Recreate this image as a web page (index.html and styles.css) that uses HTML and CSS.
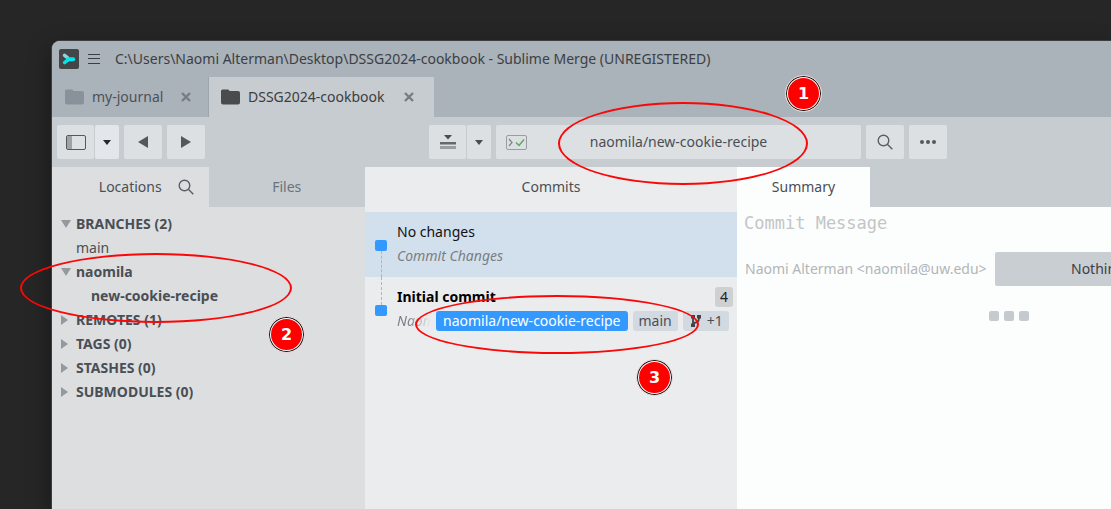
FILE: index.html
```html
<!DOCTYPE html>
<html lang="en">
<head>
<meta charset="utf-8">
<title>Sublime Merge</title>
<link rel="stylesheet" href="styles.css">
</head>
<body>
<main class="desktop">
  <div class="window">
    <header class="titlebar">
      <svg class="logo" viewBox="0 0 20 20" width="20" height="20" aria-hidden="true">
        <rect width="20" height="20" rx="2" fill="#444546"/>
        <path d="M5.500 6.300L8.500 8.600" stroke="#8bd6d8" stroke-width="3.400" stroke-linecap="round"/>
        <path d="M5.500 13.600L9.500 10.600" stroke="#00e5ee" stroke-width="3.400" stroke-linecap="round"/>
        <path d="M9 10.200H14.200" stroke="#00e5ee" stroke-width="4" stroke-linecap="round"/>
      </svg>
      <button class="menu" aria-label="Menu">
        <svg viewBox="0 0 12 10" width="12" height="10"><path d="M0 .5H12M0 4.500H12M0 9.500H12" stroke="#3b3e41"/></svg>
      </button>
      <h1 class="title">C:\Users\Naomi Alterman\Desktop\DSSG2024-cookbook - Sublime Merge (UNREGISTERED)</h1>
    </header>

    <nav class="repo-tabs">
      <div class="repo-tab repo-journal">
        <svg class="folder" viewBox="0 0 19 16" width="19" height="16"><path d="M0 2Q0 .5 1.500 .5H7Q8 .5 8.500 2H17Q19 2 19 4V13.500Q19 15.500 17 15.500H2Q0 15.500 0 13.500Z" fill="currentColor"/></svg>
        <a class="repo-name" href="#journal">my-journal</a>
        <button class="close" aria-label="Close my-journal"><svg viewBox="0 0 10 10" width="10" height="10"><path d="M1 1L9 9M9 1L1 9" stroke="currentColor" stroke-width="2.400"/></svg></button>
      </div>
      <div class="repo-tab repo-active">
        <svg class="folder" viewBox="0 0 19 16" width="19" height="16"><path d="M0 2Q0 .5 1.500 .5H7Q8 .5 8.500 2H17Q19 2 19 4V13.500Q19 15.500 17 15.500H2Q0 15.500 0 13.500Z" fill="currentColor"/></svg>
        <a class="repo-name" href="#cookbook">DSSG2024-cookbook</a>
        <button class="close" aria-label="Close DSSG2024-cookbook"><svg viewBox="0 0 10 10" width="10" height="10"><path d="M1 1L9 9M9 1L1 9" stroke="currentColor" stroke-width="2.400"/></svg></button>
      </div>
    </nav>

    <div class="toolbar">
      <div class="tools tools-nav">
        <div class="split">
          <button class="tool" aria-label="Side bar"><svg viewBox="0 0 20 15" width="20" height="15"><rect x=".5" y=".5" width="19" height="14" rx="1.500" fill="none" stroke="#55585a"/><path d="M1 1H6V14H1Z" fill="#a0a3a5"/></svg></button>
          <button class="tool drop drop-lit" aria-label="Layout options"><svg viewBox="0 0 8 5" width="8" height="5"><path d="M0 0H8L4 5Z" fill="#26282a"/></svg></button>
        </div>
        <button class="tool" aria-label="Back"><svg viewBox="0 0 10 12" width="10" height="12"><path d="M10 0V12L0 6Z" fill="#55585a"/></svg></button>
        <button class="tool" aria-label="Forward"><svg viewBox="0 0 10 12" width="10" height="12"><path d="M0 0V12L10 6Z" fill="#55585a"/></svg></button>
      </div>
      <div class="tools tools-main">
        <div class="split">
          <button class="tool" aria-label="Stash"><svg viewBox="0 0 16 14" width="16" height="14"><path d="M4 0H12L8 4.500Z" fill="#4a4d50"/><path d="M0 7H16V9.500H0Z" fill="#66696c"/><path d="M0 11H16V14H0Z" fill="#9b9ea1"/></svg></button>
          <button class="tool drop" aria-label="Stash options"><svg viewBox="0 0 8 5" width="8" height="5"><path d="M0 0H8L4 5Z" fill="#4a4d50"/></svg></button>
        </div>
        <button class="location">
          <svg viewBox="0 0 21 15" width="21" height="15"><rect x=".5" y=".5" width="20" height="14" rx="1.500" fill="none" stroke="#9a9da0"/><path d="M3 4L6 7.500L3 11" fill="none" stroke="#85888b" stroke-width="1.300"/><path d="M10 7.500L13 10.500L18 4.500" fill="none" stroke="#5fa95c" stroke-width="1.500"/></svg>
          <span>naomila/new-cookie-recipe</span>
        </button>
        <button class="tool" aria-label="Search"><svg class="glass" viewBox="0 0 16 16" width="16" height="16"><circle cx="6.500" cy="6.500" r="5.300"/><path d="M10.300 10.300L15.300 15.300"/></svg></button>
        <button class="tool" aria-label="More"><svg viewBox="0 0 16 4" width="16" height="4"><g fill="#55585a"><circle cx="2" cy="2" r="2"/><circle cx="8" cy="2" r="2"/><circle cx="14" cy="2" r="2"/></g></svg></button>
      </div>
    </div>

    <div class="panes">
      <aside class="sidebar">
        <div class="side-tabs">
          <div class="side-tab side-open">
            <a href="#locations">Locations</a>
            <button class="find" aria-label="Find location"><svg class="glass" viewBox="0 0 16 16" width="16" height="16"><circle cx="6.500" cy="6.500" r="5.300"/><path d="M10.300 10.300L15.300 15.300"/></svg></button>
          </div>
          <a class="side-tab" href="#files">Files</a>
        </div>
        <ul class="tree">
          <li class="group open">BRANCHES (2)</li>
          <li>main</li>
          <li class="group open">naomila</li>
          <li class="child">new-cookie-recipe</li>
          <li class="group">REMOTES (1)</li>
          <li class="group">TAGS (0)</li>
          <li class="group">STASHES (0)</li>
          <li class="group">SUBMODULES (0)</li>
        </ul>
      </aside>

      <section class="commits">
        <h2 class="pane-title">Commits</h2>
        <div class="commit selected">
          <span class="track track-down"></span>
          <div class="commit-body">
            <div class="line subject">No changes</div>
            <div class="line note">Commit Changes</div>
          </div>
        </div>
        <div class="commit">
          <span class="track track-up"></span>
          <div class="commit-body">
            <div class="line subject subject-bold">Initial commit <span class="count">4</span></div>
            <div class="line note">
              <span class="author">Naomi</span>
              <span class="ref ref-head">naomila/new-cookie-recipe</span>
              <span class="ref">main</span>
              <span class="ref ref-more"><svg viewBox="0 0 10 12" width="10" height="12"><path d="M2 2V10M2 8Q8 8 8 3" fill="none" stroke="#3f4449" stroke-width="1.800"/><path d="M0 0H4V3.500H0ZM6 0H10V3.500H6ZM0 8.500H4V12H0Z" fill="#3f4449"/></svg>+1</span>
            </div>
          </div>
        </div>
      </section>

      <section class="details">
        <div class="detail-tabs"><a class="detail-tab" href="#summary">Summary</a></div>
        <textarea class="message" rows="1" aria-label="Commit message" placeholder="Commit Message"></textarea>
        <div class="commit-bar">
          <span class="identity">Naomi Alterman &lt;naomila@uw.edu&gt;</span>
          <button class="commit-button" disabled>Nothing</button>
        </div>
        <div class="grip"><i></i><i></i><i></i></div>
      </section>
    </div>
  </div>

  <div class="ring ring-one"></div>
  <div class="ring ring-two"></div>
  <div class="ring ring-three"></div>
  <div class="step step-one">1</div>
  <div class="step step-two">2</div>
  <div class="step step-three">3</div>
</main>
</body>
</html>
```
FILE: styles.css
```css
* { box-sizing: border-box; }

body {
  margin: 0;
  background: #262626;
  color: #4a4f55;
  font: 14px/24px "Noto Sans", "Open Sans", sans-serif;
}

button {
  border: 0;
  padding: 0;
  background: none;
  color: inherit;
  font: inherit;
  display: flex;
  align-items: center;
  justify-content: center;
}

a { color: inherit; text-decoration: none; }
svg { display: block; flex: none; }

.glass { fill: none; stroke: #5b5f63; stroke-width: 1.4; }

.desktop {
  position: relative;
  min-height: 100vh;
  padding: 41px 0 0 52px;
  display: flex;
  overflow: hidden;
}

.window {
  flex: 1;
  min-width: 0;
  display: flex;
  flex-direction: column;
  overflow: hidden;
  border-radius: 8px 0 0 0;
  background: #c7ccd0;
  box-shadow: 0 0 0 1px #3d3d3e, 0 8px 24px #00000066;
}

/* Title bar and repository tabs */
.titlebar {
  display: flex;
  align-items: center;
  height: 36px;
  padding-left: 7px;
  background: #aab2ba;
}
.menu { margin: 0 15px 0 9px; }
.title { margin: 0; color: #3c3f43; font-size: 14px; font-weight: 400; white-space: nowrap; }

.repo-tabs { display: flex; height: 40px; background: #aab2ba; }
.repo-tab { display: flex; align-items: center; padding: 0 20px 0 12px; color: #3b3d40; }
.repo-journal { width: 157px; padding: 0 17px 0 13px; border-right: 1px solid #9ca4ac; }
.repo-active { width: 225px; background: #c7ccd0; }
.folder { margin-right: 8px; color: #4a4b4d; }
.repo-journal .folder { color: #89919a; }
.repo-journal .repo-name { color: #4c5157; }
.repo-name { flex: 1; white-space: nowrap; }
.close { color: #787d82; }

/* Toolbar */
.toolbar { display: flex; height: 50px; padding: 8px 5px; }
.tools { display: flex; gap: 5px; }
.tools-nav { flex: 0 0 372px; }
.tools-main { flex: 1; min-width: 0; }
.split { display: flex; gap: 1px; }
.tool { width: 38px; border-radius: 2px; background: #dce0e3; }
.split .tool { width: 37px; }
.split .drop { width: 24px; }
.drop-lit { background: #e3e6ea; }
.location {
  flex: 0 1 365px;
  display: grid;
  grid-template-columns: 1fr auto 1fr;
  padding: 0 10px;
  border-radius: 2px;
  background: #dce0e3;
}

/* Panes */
.panes { flex: 1; display: grid; grid-template-columns: 313px 372px 1fr; }

.sidebar { background: #dddee0; }
.side-tabs { display: grid; grid-template-columns: 1fr 1fr; height: 40px; }
.side-tab {
  display: flex;
  align-items: center;
  justify-content: center;
  background: #c7ccd0;
  color: #6a737b;
}
.side-open { gap: 16px; padding-left: 32px; background: #dddee0; color: #4a4f55; }

.tree { margin: 0; padding: 5px 0 0 9px; list-style: none; }
.tree li { display: flex; align-items: center; padding-left: 15px; }
.tree .child { padding-left: 30px; font-weight: 700; }
.tree .group { padding-left: 0; font-weight: 700; }
.group::before {
  content: "";
  width: 7px;
  height: 10px;
  margin-right: 8px;
  background: #96999c;
  clip-path: polygon(0 0, 100% 50%, 0 100%);
}
.group.open::before {
  width: 10px;
  height: 8px;
  margin-right: 5px;
  clip-path: polygon(0 0, 100% 0, 50% 100%);
}

.commits { background: #ebecee; }
.pane-title {
  margin: 0;
  padding-bottom: 5px;
  font-size: 14px;
  font-weight: 400;
  line-height: 40px;
  text-align: center;
}
.commit { display: flex; height: 65px; padding-left: 10px; }
.selected { background: #d2e0ee; }
.track { display: flex; flex-direction: column; align-items: center; width: 12px; margin-right: 10px; }
.track::before {
  content: "";
  flex: none;
  order: 1;
  width: 12px;
  height: 11px;
  border-radius: 2px;
  background: #3399ff;
}
.track::after { content: ""; width: 0; border-left: 1px dashed #8fbfe8; }
.track-down { padding-top: 28px; }
.track-down::after { order: 2; flex: 1; }
.track-up::after { height: 28px; }
.commit-body { flex: 1; min-width: 0; padding: 8px 4px 0 0; }
.line { display: flex; align-items: center; }
.subject { justify-content: space-between; color: #111; }
.subject-bold { color: #000; font-weight: 700; }
.note { gap: 5px; color: #7a7e83; font-style: italic; }
.count, .ref { border-radius: 3px; line-height: 20px; }
.count { padding: 0 5px; background: #cfd0d2; color: #222; font-weight: 400; }
.ref { padding: 0 6px; background: #d3d9e0; color: #4a4f55; font-style: normal; white-space: nowrap; }
.ref-head { padding: 0 7px; background: #3399ff; color: #fff; }
.ref-more { display: flex; align-items: center; gap: 6px; padding: 0 6px 0 8px; }
.author {
  width: 34px;
  overflow: hidden;
  -webkit-mask-image: linear-gradient(to right, #000 30%, transparent);
  mask-image: linear-gradient(to right, #000 30%, transparent);
}

.details { display: flex; flex-direction: column; min-width: 0; overflow: hidden; background: #fcfefd; }
.detail-tabs { display: flex; height: 40px; background: #c7ccd0; }
.detail-tab { width: 133px; background: #fcfefd; line-height: 40px; text-align: center; }
.message {
  height: 45px;
  padding: 4px 7px;
  border: 0;
  outline: 0;
  resize: none;
  background: none;
  font: 17px/24px "DejaVu Sans Mono", "Liberation Mono", monospace;
}
.message::placeholder { color: #c3c5c7; opacity: 1; }
.commit-bar { display: flex; height: 34px; padding-left: 8px; line-height: 34px; }
.identity { flex: 0 0 250px; color: #b2b5b8; white-space: nowrap; }
.commit-button {
  flex: 1 0 140px;
  justify-content: flex-start;
  padding-left: 76px;
  border-radius: 2px 0 0 2px;
  background: #c9ced2;
  color: #3d3d48;
}
.grip { display: flex; gap: 5px; padding: 25px 0 0 252px; }
.grip i { width: 10px; height: 10px; border-radius: 2px; background: #c5cacf; }

/* Callouts drawn over the window */
.ring { position: absolute; border: 2px solid #fa0808; border-radius: 50%; pointer-events: none; }
.ring-one { left: 558px; top: 102px; width: 250px; height: 83px; }
.ring-two { left: 20px; top: 253px; width: 272px; height: 70px; }
.ring-three { left: 415px; top: 295px; width: 284px; height: 59px; }

.step {
  position: absolute;
  width: 37px;
  height: 37px;
  border: 1px solid #e8e8e8;
  border-radius: 50%;
  background: #ff0000;
  box-shadow: inset 0 0 0 1px #111, inset 0 0 0 2px #fff;
  color: #fff;
  font: 700 16px/36px "DejaVu Sans", sans-serif;
  text-align: center;
}
.step-one { left: 785px; top: 75px; }
.step-two { left: 268px; top: 316px; }
.step-three { left: 636px; top: 359px; }
```
